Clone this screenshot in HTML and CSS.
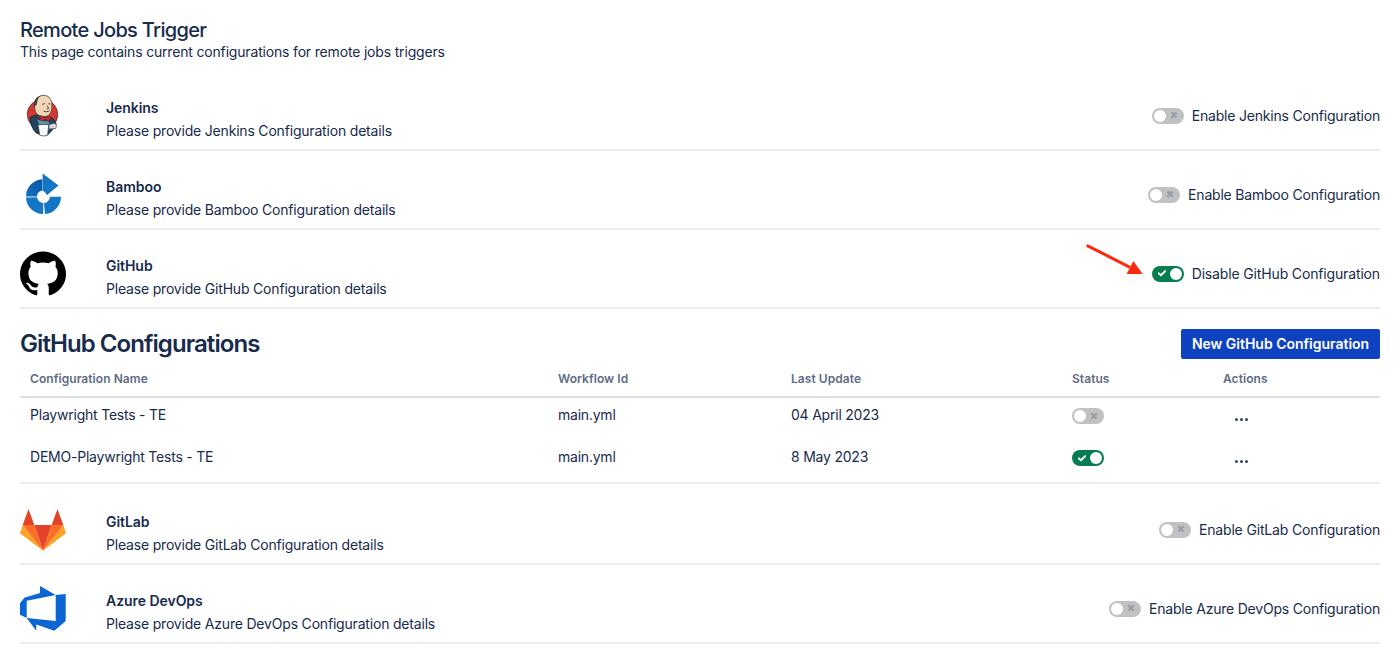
FILE: index.html
```html
<!DOCTYPE html>
<html lang="en">
<head>
<meta charset="utf-8">
<title>Remote Jobs Trigger</title>
<link rel="stylesheet" href="styles.css">
</head>
<body>
<svg class="defs" width="0" height="0">
  <defs>
    <symbol id="cross" viewBox="0 0 8 8"><path d="M1.400 1.400 6.600 6.600M6.600 1.400 1.400 6.600" fill="none" stroke="currentColor" stroke-width="2.400"/></symbol>
    <symbol id="check" viewBox="0 0 8 8"><path d="M.9 4.400 3 6.200 7.200 2.100" fill="none" stroke="currentColor" stroke-width="2" stroke-linecap="round"/></symbol>
  </defs>
</svg>
<main class="page">
  <header class="intro">
    <h1 class="title">Remote Jobs Trigger</h1>
    <p class="subtitle">This page contains current configurations for remote jobs triggers</p>
  </header>

  <section class="provider">
    <svg class="logo" viewBox="0 0 46 46">
      <circle cx="22.500" cy="21.500" r="15.200" fill="#d33833" stroke="#5a2624" stroke-width=".8"/>
      <path d="M10 24.500c2-1.500 5-2.500 8-2.500l11 2c4 1 6.500 3.500 7.200 7l-3 5-5 5.500c-4 1-8 .5-12-1.500-3.500-3.500-6-9-6.200-15.500z" fill="#24435a" stroke="#17242e" stroke-width=".8"/>
      <path d="M15.500 19c-1.500-5-1.300-9.500.7-12.500 3-4.500 9-5.500 12.800-2.200 2.800 2.500 3.300 7 2.600 12-.6 4-2.600 6.700-6 7.200-4 .4-8.300-1-10.100-4.500z" fill="#efd6b6" stroke="#4d443e" stroke-width=".8"/>
      <path d="M14.700 16.500c-1.600-3-1.500-7 .6-10.300 1.400-2 3.700-3.500 5.900-3.700-2.500 1.500-3.500 3.500-3.800 6l-.8 3.500c-1.500.2-2 2.500-1.900 4.500z" fill="#4a4441"/>
      <path d="M22.300 11.300l2.700-.7M28.200 10.700l2 .3M23.500 18.200c2.300 1 4.200 .4 6-.4M27.200 12.500l1.500 3-2 .4" fill="none" stroke="#5c4a40" stroke-width="1"/>
      <path d="M20 22.500l5 2.300 5-1.800.3 4.500-4.500-1-5.300 1.200z" fill="#d8232f" stroke="#7c1c1a" stroke-width=".5"/>
      <path d="M17 26.500l5 1.500 6.500.5 1 3-10 .5z" fill="#5b93a8"/>
      <path d="M29 31.500l5.500-1.200 2 1.700-.5 3.400-7 .6z" fill="#d9dadb" stroke="#555" stroke-width=".7"/>
      <path d="M18 31.500h10.800l-1.200 10.800c-2.500.8-5.500.8-7.800 0z" fill="#f9fafb" stroke="#303a42" stroke-width=".7"/>
    </svg>
    <div class="info"><h2 class="name">Jenkins</h2><p class="details">Please provide Jenkins Configuration details</p></div>
    <div class="switch"><span class="toggle"><svg class="mark"><use href="#cross"/></svg></span><span class="label">Enable Jenkins Configuration</span></div>
  </section>

  <section class="provider">
    <svg class="logo" viewBox="0 0 46 46">
      <defs><linearGradient id="leaf" x1="1" y1="0" x2="0" y2="1"><stop offset="0" stop-color="#0a55a6"/><stop offset="1" stop-color="#1170bf"/></linearGradient></defs>
      <path d="M22.300 7.200v11.200A6.200 6.200 0 0 0 17 24.400H6A17.500 17.500 0 0 1 22.300 7.200z" fill="url(#leaf)"/>
      <path d="M6 25.400l11-.2A6.400 6.400 0 0 0 23.200 31V42A17.300 17.300 0 0 1 6 25.400z" fill="#1276c4"/>
      <path d="M24 31A6.400 6.400 0 0 0 29.900 24.700H41A17.500 17.500 0 0 1 25 42z" fill="#1276c4"/>
      <path d="M22.600 1.500 38.500 13.600 26.800 23.200C26 21.200 24.800 19.500 22.600 18.800z" fill="#1276c4"/>
    </svg>
    <div class="info"><h2 class="name">Bamboo</h2><p class="details">Please provide Bamboo Configuration details</p></div>
    <div class="switch"><span class="toggle"><svg class="mark"><use href="#cross"/></svg></span><span class="label">Enable Bamboo Configuration</span></div>
  </section>

  <section class="provider">
    <svg class="logo" viewBox="0 0 16 16.400" preserveAspectRatio="none"><path d="M8 .2C3.580.2 0 3.780 0 8.200c0 3.540 2.290 6.530 5.470 7.590.4.070.55-.17.55-.38 0-.19-.01-.82-.01-1.490-2.010.37-2.530-.49-2.690-.94-.09-.23-.48-.94-.82-1.130-.28-.15-.68-.52-.01-.53.63-.01 1.080.58 1.230.82.72 1.210 1.870.87 2.330.66.07-.52.28-.87.51-1.070-1.780-.2-3.640-.89-3.640-3.950 0-.87.31-1.590.82-2.150-.08-.2-.36-1.020.08-2.120 0 0 .67-.21 2.200.82.64-.18 1.320-.27 2-.27s1.360.09 2 .27c1.530-1.040 2.200-.82 2.200-.82.44 1.100.16 1.920.08 2.120.51.56.82 1.270.82 2.150 0 3.070-1.870 3.750-3.650 3.950.29.25.54.73.54 1.480 0 1.070-.01 1.930-.01 2.200 0 .21.15.46.55.38A8.010 8.010 0 0 0 16 8.200c0-4.420-3.580-8-8-8z"/></svg>
    <div class="info"><h2 class="name">GitHub</h2><p class="details">Please provide GitHub Configuration details</p></div>
    <div class="switch">
      <svg class="pointer" viewBox="0 0 60 32"><path d="M2.700 3.300 46 25.300" stroke="#ff2a0d" stroke-width="3" fill="none"/><path d="M58.700 32 49.300 19 42.700 32z" fill="#ff2a0d"/></svg>
      <span class="toggle on"><svg class="mark"><use href="#check"/></svg></span><span class="label github">Disable GitHub Configuration</span>
    </div>
  </section>

  <section class="configs">
    <div class="configs-head">
      <h2 class="configs-title">GitHub Configurations</h2>
      <button class="new-button">New GitHub Configuration</button>
    </div>
    <div class="row head"><span>Configuration Name</span><span>Workflow Id</span><span>Last Update</span><span>Status</span><span>Actions</span></div>
    <div class="row"><span>Playwright Tests - TE</span><span>main.yml</span><span>04 April 2023</span><span class="toggle"><svg class="mark"><use href="#cross"/></svg></span><span class="more"><i></i><i></i><i></i></span></div>
    <div class="row"><span>DEMO-Playwright Tests - TE</span><span>main.yml</span><span>8 May 2023</span><span class="toggle on"><svg class="mark"><use href="#check"/></svg></span><span class="more"><i></i><i></i><i></i></span></div>
  </section>

  <section class="provider">
    <svg class="logo" viewBox="0 0 46 46">
      <path d="M2.700 18 8.500 2l5.800 16zM31.700 18 37.500 2l5.800 16zM14.300 18h17.400L23 43.700z" fill="#e24329"/>
      <path d="M2.700 18 0 26.300 23 43.700zM43.300 18 46 26.300 23 43.700z" fill="#fca326"/>
      <path d="M2.700 18h11.600L23 43.700zM43.300 18H31.700L23 43.700z" fill="#fc6d26"/>
    </svg>
    <div class="info"><h2 class="name">GitLab</h2><p class="details">Please provide GitLab Configuration details</p></div>
    <div class="switch"><span class="toggle"><svg class="mark"><use href="#cross"/></svg></span><span class="label gitlab">Enable GitLab Configuration</span></div>
  </section>

  <section class="provider">
    <svg class="logo" viewBox="0 0 46 46"><path fill="#0b66d3" fill-rule="evenodd" d="M0 17.300 4.300 11.700 20 7V0L35.700 9 45.700 8V35L34.300 44.700 16.300 38.500v6.200L6.700 32 0 28.700zM6.700 14.700V32l29 3V9z"/></svg>
    <div class="info"><h2 class="name">Azure DevOps</h2><p class="details">Please provide Azure DevOps Configuration details</p></div>
    <div class="switch"><span class="toggle"><svg class="mark"><use href="#cross"/></svg></span><span class="label azure">Enable Azure DevOps Configuration</span></div>
  </section>
</main>
</body>
</html>
```
FILE: styles.css
```css
* { box-sizing: border-box; }
body {
  margin: 0;
  background: #fff;
  color: #172b4d;
  font: 400 14px/20px Inter, "Liberation Sans", sans-serif;
  letter-spacing: -0.175px;
}
h1, h2, p { margin: 0; }
.defs { display: block; }
.page { padding: 18px 20px 0; }
.intro { height: 54px; }
.title { font-size: 20px; font-weight: 500; line-height: 24px; letter-spacing: -0.68px; }
.subtitle { line-height: 20px; }
.provider {
  display: flex;
  height: 79px;
  padding: 21px 0 10px;
  border-bottom: 2px solid #ebecec;
}
.logo { width: 46px; height: 46px; flex: none; display: block; }
.info { margin-left: 40px; padding-top: 4px; }
.name { font-size: 14px; font-weight: 600; line-height: 22px; letter-spacing: -0.05px; }
.details { line-height: 24px; letter-spacing: -0.19px; }
.switch {
  position: relative;
  display: flex;
  align-items: center;
  gap: 8px;
  height: 46px;
  margin-left: auto;
}
.label { letter-spacing: -0.2px; }
.label.github { letter-spacing: -0.15px; }
.label.gitlab { letter-spacing: -0.16px; }
.label.azure { letter-spacing: -0.215px; }
.toggle {
  display: flex;
  align-items: center;
  justify-content: space-between;
  width: 32px;
  height: 16px;
  padding: 0 6px 0 2px;
  border-radius: 8px;
  background: #c1c1c1;
  color: #97a0af;
}
.toggle::before {
  content: "";
  width: 12px;
  height: 12px;
  border-radius: 50%;
  background: #fff;
}
.mark { width: 8px; height: 8px; flex: none; margin-bottom: 2px; }
.row .mark { margin-bottom: 0; }
.toggle.on {
  flex-direction: row-reverse;
  padding: 0 2px 0 6px;
  background: #067d50;
  color: #fff;
}
.pointer { position: absolute; right: calc(100% + 8px); top: -9px; width: 60px; height: 32px; }
.configs { height: 177px; padding-top: 20px; }
.configs::after { content: ""; display: block; height: 2px; background: #ebecec; }
.configs-head { display: flex; justify-content: space-between; height: 30px; align-items: center; }
.configs-title { font-size: 24px; font-weight: 600; line-height: 28px; letter-spacing: -0.94px; }
.new-button {
  height: 30px;
  width: 199px;
  padding: 0;
  border: 0;
  border-radius: 2px;
  background: #0f42c1;
  color: #fff;
  font: 600 14px/30px Inter, sans-serif;
  letter-spacing: -0.01px;
}
.row {
  display: grid;
  grid-template-columns: 528px 233px 281px 151px 1fr;
  align-items: center;
  height: 42px;
  padding: 0 0 8px 10px;
  letter-spacing: -0.22px;
}
.row.head {
  height: 39px;
  padding-top: 3px;
  padding-bottom: 0;
  border-bottom: 2px solid #dcdfe6;
  color: #5e6c84;
  font-size: 12px;
  font-weight: 600;
  letter-spacing: 0.06px;
}
.row .toggle { margin-top: 2px; }
.more { display: flex; gap: 2px; margin: 8px 0 0 12px; }
.more i { width: 3px; height: 3px; border-radius: 50%; background: #344563; }
```
